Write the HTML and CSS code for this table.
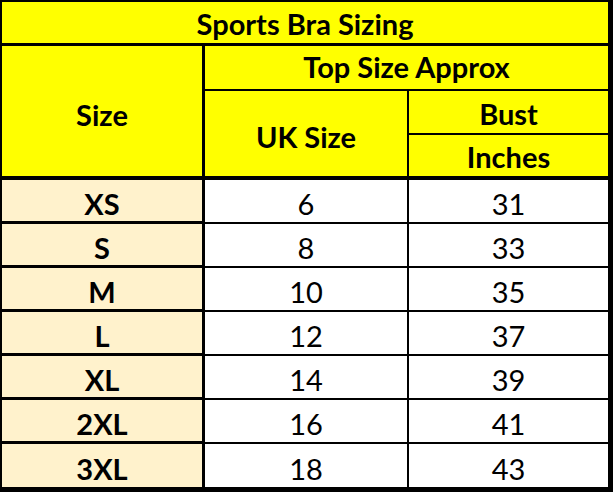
FILE: index.html
```html
<!DOCTYPE html>
<html>
<head>
<meta charset="utf-8">
<link rel="stylesheet" href="styles.css">
</head>
<body>
<table class="sizing">
  <colgroup>
    <col class="c1"><col class="c2"><col class="c3">
  </colgroup>
  <tr class="r-title">
    <th colspan="3" class="title">Sports Bra Sizing</th>
  </tr>
  <tr class="r-top">
    <th rowspan="3" class="size-h">Size</th>
    <th colspan="2" class="top">Top Size Approx</th>
  </tr>
  <tr class="r-bust">
    <th rowspan="2" class="uk">UK Size</th>
    <th class="bust">Bust</th>
  </tr>
  <tr class="r-inch">
    <th class="inch">Inches</th>
  </tr>
  <tr class="data"><td class="sz">XS</td><td class="uk-v">6</td><td class="in-v">31</td></tr>
  <tr class="data"><td class="sz">S</td><td class="uk-v">8</td><td class="in-v">33</td></tr>
  <tr class="data"><td class="sz">M</td><td class="uk-v">10</td><td class="in-v">35</td></tr>
  <tr class="data"><td class="sz">L</td><td class="uk-v">12</td><td class="in-v">37</td></tr>
  <tr class="data"><td class="sz">XL</td><td class="uk-v">14</td><td class="in-v">39</td></tr>
  <tr class="data"><td class="sz">2XL</td><td class="uk-v">16</td><td class="in-v">41</td></tr>
  <tr class="data last"><td class="sz">3XL</td><td class="uk-v">18</td><td class="in-v">43</td></tr>
</table>
</body>
</html>
```
FILE: styles.css
```css
html, body {
  margin: 0;
  padding: 0;
  background: #ffffff;
}
.sizing {
  border-collapse: separate;
  border-spacing: 0;
  table-layout: fixed;
  width: 613px;
  border-top: 2px solid #000;
  border-left: 2px solid #000;
  border-right: 5px solid #000;
  border-bottom: 5px solid #000;
  box-sizing: border-box;
  font-family: "Lato", "Liberation Sans", sans-serif;
  font-size: 29px;
  color: #000;
}
.c1 { width: 203px; }
.c2 { width: 204px; }
.c3 { width: 199px; }
th, td {
  padding: 0;
  text-align: center;
  vertical-align: middle;
  line-height: 1;
  box-sizing: border-box;
}
th {
  background: #ffff00;
  font-weight: 700;
}
.title {
  height: 44px;
  border-bottom: 3px solid #000;
  padding-top: 1px;
  padding-bottom: 0;
}
.size-h {
  border-right: 3px solid #000;
  border-bottom: 4px solid #000;
  padding-top: 7px;
}
.top {
  height: 45px;
  border-bottom: 2px solid #000;
  padding-bottom: 2px;
}
.uk {
  border-right: 2px solid #000;
  border-bottom: 4px solid #000;
  padding-top: 6px;
}
.bust {
  height: 44px;
  border-bottom: 2px solid #000;
  padding-top: 3px;
}
.inch {
  height: 45px;
  border-bottom: 4px solid #000;
  padding-top: 2px;
}
td {
  height: 44px;
  border-bottom: 2px solid #000;
  padding-top: 5px;
}
.last td {
  border-bottom: none;
  height: 43px;
}
.sz {
  background: #fff2cc;
  font-weight: 700;
  border-right: 3px solid #000;
  border-bottom-width: 3px;
}
.uk-v {
  font-weight: 400;
  border-right: 2px solid #000;
  background: #fff;
}
.in-v {
  font-weight: 400;
  background: #fff;
}
```
